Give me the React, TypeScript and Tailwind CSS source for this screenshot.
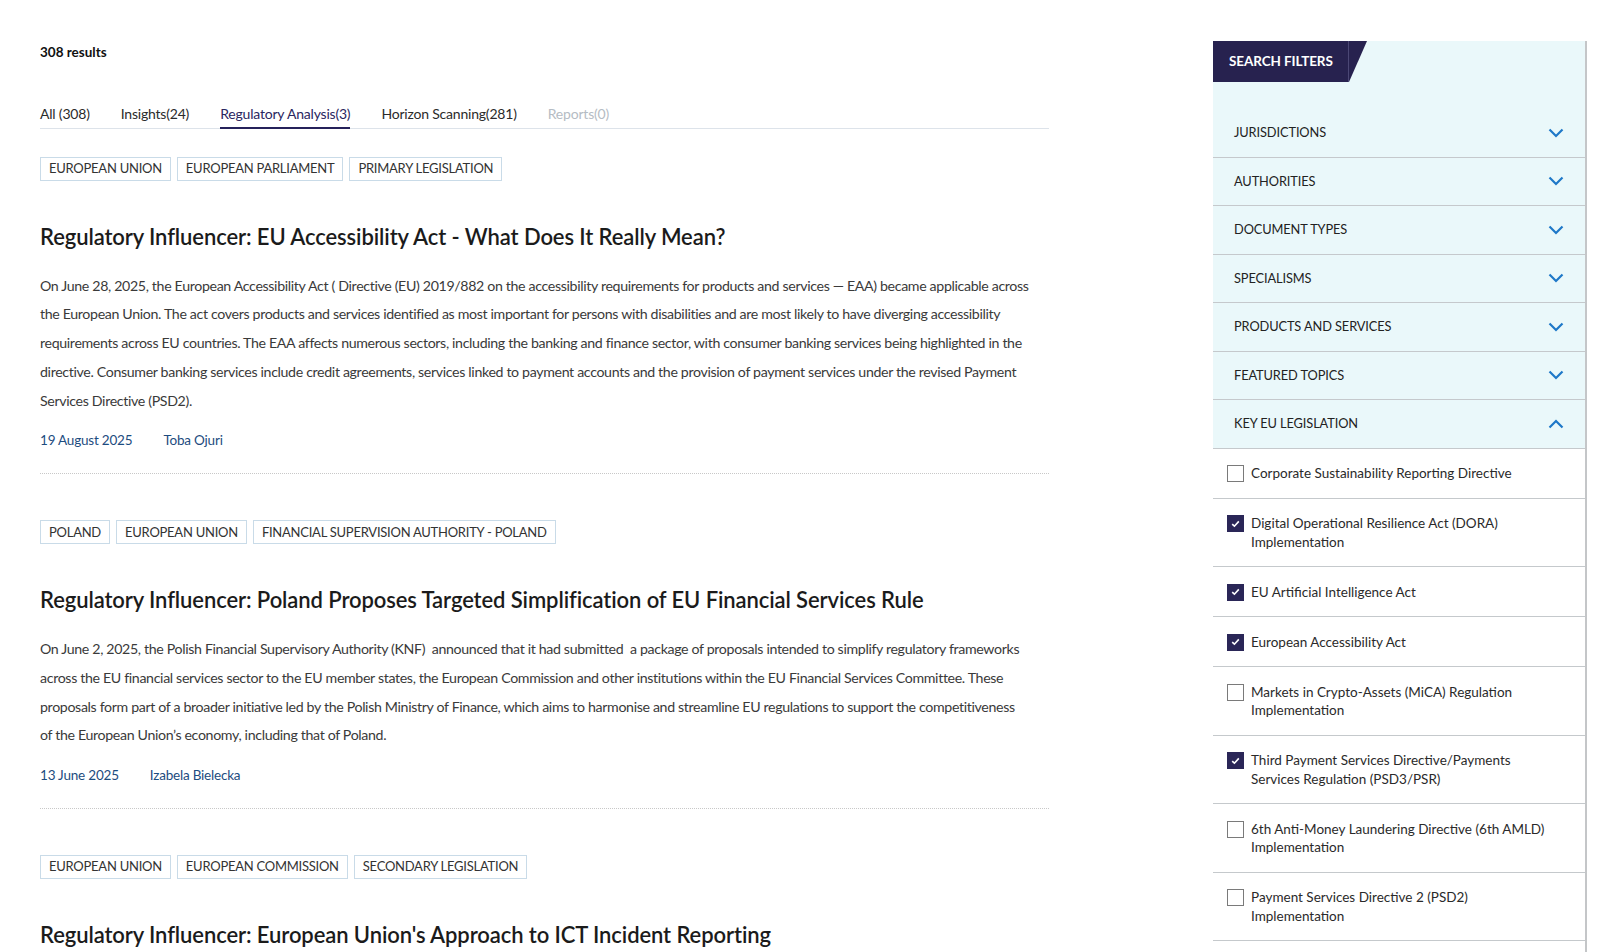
import React from "react";

const font = { fontFamily: "Lato, 'Noto Sans', sans-serif" };

type Article = {
  tags: string[];
  title: string;
  lines: string[];
  date: string;
  author: string;
};

const articles: Article[] = [
  {
    tags: ["EUROPEAN UNION", "EUROPEAN PARLIAMENT", "PRIMARY LEGISLATION"],
    title: "Regulatory Influencer: EU Accessibility Act - What Does It Really Mean?",
    lines: [
      "On June 28, 2025, the European Accessibility Act ( Directive (EU) 2019/882 on the accessibility requirements for products and services — EAA) became applicable across",
      "the European Union. The act covers products and services identified as most important for persons with disabilities and are most likely to have diverging accessibility",
      "requirements across EU countries. The EAA affects numerous sectors, including the banking and finance sector, with consumer banking services being highlighted in the",
      "directive. Consumer banking services include credit agreements, services linked to payment accounts and the provision of payment services under the revised Payment",
      "Services Directive (PSD2).",
    ],
    date: "19 August 2025",
    author: "Toba Ojuri",
  },
  {
    tags: ["POLAND", "EUROPEAN UNION", "FINANCIAL SUPERVISION AUTHORITY - POLAND"],
    title: "Regulatory Influencer: Poland Proposes Targeted Simplification of EU Financial Services Rule",
    lines: [
      "On June 2, 2025, the Polish Financial Supervisory Authority (KNF)  announced that it had submitted  a package of proposals intended to simplify regulatory frameworks",
      "across the EU financial services sector to the EU member states, the European Commission and other institutions within the EU Financial Services Committee. These",
      "proposals form part of a broader initiative led by the Polish Ministry of Finance, which aims to harmonise and streamline EU regulations to support the competitiveness",
      "of the European Union’s economy, including that of Poland.",
    ],
    date: "13 June 2025",
    author: "Izabela Bielecka",
  },
  {
    tags: ["EUROPEAN UNION", "EUROPEAN COMMISSION", "SECONDARY LEGISLATION"],
    title: "Regulatory Influencer: European Union's Approach to ICT Incident Reporting",
    lines: [],
    date: "",
    author: "",
  },
];

const tabs = [
  { label: "All (308)" },
  { label: "Insights(24)" },
  { label: "Regulatory Analysis(3)", active: true },
  { label: "Horizon Scanning(281)" },
  { label: "Reports(0)", disabled: true },
];

const filters = [
  "JURISDICTIONS",
  "AUTHORITIES",
  "DOCUMENT TYPES",
  "SPECIALISMS",
  "PRODUCTS AND SERVICES",
  "FEATURED TOPICS",
];

const legislation = [
  { label: ["Corporate Sustainability Reporting Directive"], checked: false },
  { label: ["Digital Operational Resilience Act (DORA)", "Implementation"], checked: true },
  { label: ["EU Artificial Intelligence Act"], checked: true },
  { label: ["European Accessibility Act"], checked: true },
  { label: ["Markets in Crypto-Assets (MiCA) Regulation", "Implementation"], checked: false },
  { label: ["Third Payment Services Directive/Payments", "Services Regulation (PSD3/PSR)"], checked: true },
  { label: ["6th Anti-Money Laundering Directive (6th AMLD)", "Implementation"], checked: false },
  { label: ["Payment Services Directive 2 (PSD2)", "Implementation"], checked: false },
];

function Chevron({ up }: { up?: boolean }) {
  return (
    <svg width="16" height="10" viewBox="0 0 16 10" className="text-[#1f78c8]">
      <path
        d={up ? "M1.5 8.5 L8 2 L14.5 8.5" : "M1.5 1.5 L8 8 L14.5 1.5"}
        fill="none"
        stroke="currentColor"
        strokeWidth="2.2"
      />
    </svg>
  );
}

function Checkbox({ checked }: { checked: boolean }) {
  if (checked) {
    return (
      <span className="flex h-[17px] w-[17px] shrink-0 items-center justify-center bg-[#2a2657]">
        <svg width="9" height="8" viewBox="0 0 9 8">
          <path d="M1.2 4.2 L3.4 6.2 L7.8 1.4" fill="none" stroke="white" strokeWidth="1.6" />
        </svg>
      </span>
    );
  }
  return <span className="block h-[17px] w-[17px] shrink-0 border border-[#7a7a7a] bg-white" />;
}

function ArticleBlock({ a, first }: { a: Article; first: boolean }) {
  return (
    <div className={first ? "mt-[28px]" : "mt-[46px]"}>
      <div className="flex gap-[6px]">
        {a.tags.map((t) => (
          <span
            key={t}
            className="flex h-[24px] items-center border border-[#c9dbe8] px-[8px] text-[13px] tracking-[-0.25px] text-[#333]"
          >
            {t}
          </span>
        ))}
      </div>
      <h2 className="mt-[42px] text-[22px] leading-[28px] font-semibold tracking-[-0.1px] text-[#1b1b1b] whitespace-nowrap">
        {a.title}
      </h2>
      {a.lines.length > 0 && (
        <>
          <p className="mt-[20.5px] text-[14.2px] leading-[28.8px] tracking-[-0.35px] text-[#3a3a3a]">
            {a.lines.map((l, i) => (
              <span key={i} className="block whitespace-pre">
                {l}
              </span>
            ))}
          </p>
          <div className="mt-[15px] flex gap-[31px] text-[13.5px] leading-[20px] tracking-[-0.2px] text-[#1d4c80]">
            <span>{a.date}</span>
            <span>{a.author}</span>
          </div>
          <div className="mt-[23px] border-t border-dotted border-[#c8c8c8]" />
        </>
      )}
    </div>
  );
}

export default function App() {
  return (
    <div className="flex min-h-screen items-start bg-white pl-[40px]" style={font}>
      <main className="w-[1009px] shrink-0 pt-[42px]">
        <div className="text-[13.5px] leading-[20px] font-bold text-[#111]">308 results</div>
        <div className="mt-[42px] flex gap-[31px] border-b border-[#dde3ea]">
          {tabs.map((t) => (
            <div
              key={t.label}
              className={
                "pb-[3px] text-[14px] leading-[20px] tracking-[-0.2px] border-b-2 -mb-[1px] " +
                (t.active
                  ? "border-[#25215a] text-[#2a2660]"
                  : t.disabled
                  ? "border-transparent text-[#b5bcc4]"
                  : "border-transparent text-[#2b2b2b]")
              }
            >
              {t.label}
            </div>
          ))}
        </div>
        {articles.map((a, i) => (
          <ArticleBlock key={i} a={a} first={i === 0} />
        ))}
      </main>

      <aside className="ml-[164px] mt-[41px] w-[374px] shrink-0 border-r-2 border-[#c4c6c8] bg-[#eaf8fa]">
        <div className="flex h-[41px]">
          <div className="flex items-center border-r border-[#4b4775] bg-[#27224f] pl-[16px] pr-[15px] text-[13.5px] font-bold tracking-[-0.1px] text-white">
            SEARCH FILTERS
          </div>
          <svg width="18" height="41" viewBox="0 0 18 41" className="block">
            <path d="M0 0 L18 0 L0 41 Z" fill="#27224f" />
          </svg>
        </div>
        <div className="h-[27px]" />
        {filters.map((f) => (
          <div
            key={f}
            className="flex h-[48.5px] items-center justify-between border-b border-[#c5c9cc] pl-[21px] pr-[21px] text-[12.8px] tracking-[-0.1px] text-[#222]"
          >
            <span>{f}</span>
            <Chevron />
          </div>
        ))}
        <div className="flex h-[48.5px] items-center justify-between border-b border-[#c5c9cc] pl-[21px] pr-[21px] text-[12.8px] tracking-[-0.1px] text-[#222]">
          <span>KEY EU LEGISLATION</span>
          <Chevron up />
        </div>
        <div className="bg-white">
          {legislation.map((l, i) => (
            <div
              key={i}
              className="flex gap-[7px] border-b border-[#c5c9cc] pt-[15.75px] pb-[14.75px] pl-[14px] pr-[12px] text-[13.5px] leading-[18.5px] text-[#2a2a2a]"
            >
              <div className="pt-[1px]">
                <Checkbox checked={l.checked} />
              </div>
              <div>
                {l.label.map((x, j) => (
                  <div key={j}>{x}</div>
                ))}
              </div>
            </div>
          ))}
          <div className="h-[40px]" />
        </div>
      </aside>
    </div>
  );
}
